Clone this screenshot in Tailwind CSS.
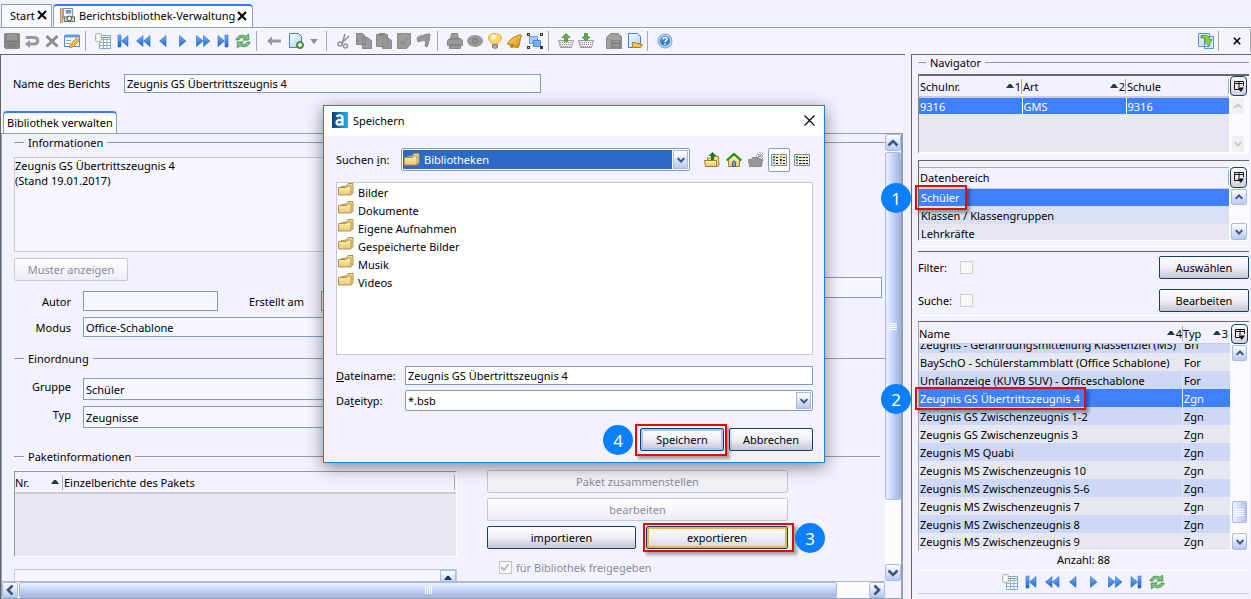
<!DOCTYPE html>
<html lang="de">
<head>
<meta charset="utf-8">
<meta name="viewport" content="width=device-width, initial-scale=1">
<title>Berichtsbibliothek-Verwaltung</title>
<script src="https://cdn.jsdelivr.net/npm/@tailwindcss/browser@4"></script>
</head>
<body class="relative flex h-screen flex-col overflow-hidden bg-[#f2f2ff] font-['Noto_Sans','Open_Sans',sans-serif] text-[11px] leading-[15px] text-black">

<svg class="absolute size-0" aria-hidden="true">
  <defs>
    <linearGradient id="blue" x1="0" y1="0" x2="0" y2="1"><stop offset="0" stop-color="#7db4f4"/><stop offset="1" stop-color="#1c63cf"/></linearGradient>
    <linearGradient id="fold" x1="0" y1="0" x2="0" y2="1"><stop offset="0" stop-color="#fdf6a8"/><stop offset="1" stop-color="#e8c678"/></linearGradient>
    <linearGradient id="page" x1="0" y1="0" x2="1" y2="1"><stop offset="0" stop-color="#ffffff"/><stop offset="1" stop-color="#a9d0f7"/></linearGradient>
    <linearGradient id="gold" x1="0" y1="0" x2="1" y2="1"><stop offset="0" stop-color="#ffdf70"/><stop offset="1" stop-color="#d98a0c"/></linearGradient>
    <linearGradient id="logo" x1="0" y1="0" x2="1" y2="0"><stop offset="0" stop-color="#0b3f78"/><stop offset="1" stop-color="#25b4ef"/></linearGradient>
  </defs>
  <symbol id="i-table" viewBox="0 0 16 16"><path fill="#fff" stroke="#7fa6d4" d="M5.500 2.500h10v13h-11v-9"/><path fill="#6cb45c" d="M7 4h8v1H7z"/><path stroke="#8eb0d8" d="M5 6.500h10M5 9.500h10M5 12.500h10M8.500 5v10M12 5v10"/><rect x=".5" y=".5" width="6" height="8" rx="1" fill="#e8e8e4" stroke="#b4b4b0"/><path stroke="#fff" stroke-width="2" d="M3.500 2v5"/></symbol>
  <symbol id="i-first" viewBox="0 0 16 16"><path fill="url(#blue)" stroke="#2a6bd0" stroke-width=".6" d="M3 2h3v12H3zM13 2.500v11L6.500 8z"/></symbol>
  <symbol id="i-rew" viewBox="0 0 16 16"><path fill="url(#blue)" stroke="#2a6bd0" stroke-width=".6" d="M8 2.500v11L1.500 8zM15 2.500v11L8.500 8z"/></symbol>
  <symbol id="i-prev" viewBox="0 0 16 16"><path fill="url(#blue)" stroke="#2a6bd0" stroke-width=".6" d="M11 2.500v11L4.500 8z"/></symbol>
  <symbol id="i-next" viewBox="0 0 16 16"><path fill="url(#blue)" stroke="#2a6bd0" stroke-width=".6" d="M4.500 2.500v11L11 8z"/></symbol>
  <symbol id="i-fwd" viewBox="0 0 16 16"><path fill="url(#blue)" stroke="#2a6bd0" stroke-width=".6" d="M1.500 2.500v11L8 8zM8.500 2.500v11L15 8z"/></symbol>
  <symbol id="i-last" viewBox="0 0 16 16"><path fill="url(#blue)" stroke="#2a6bd0" stroke-width=".6" d="M3 2.500v11L9.500 8zM10 2h3v12h-3z"/></symbol>
  <symbol id="i-refresh" viewBox="0 0 16 16"><path fill="#7cc07c" stroke="#2f8a3c" stroke-width=".7" d="M.8 7C2 2.500 7 1 11 3.200L13.500 1l.5 6-6 .2 1.600-1.700C6.500 4 4.500 5 4 7zM15.200 9C14 13.500 9 15 5 12.800L2.500 15 2 9l6-.2-1.600 1.700C9.500 12 11.500 11 12 9z"/></symbol>
  <symbol id="i-folder" viewBox="0 0 16 14"><path fill="#f0dc90" stroke="#b5904c" d="M3.500 10.500v-7l5-.5 1.500-2.500h5v9.500l-1.500 1"/><path fill="url(#fold)" stroke="#b5904c" d="M.5 4.500h8l1.500-1.500h3v9H.5z"/></symbol>
  <symbol id="i-up" viewBox="0 0 12 8"><path fill="none" stroke="currentColor" stroke-width="2.600" d="M1.500 6.500 6 2l4.500 4.500"/></symbol>
  <symbol id="i-down" viewBox="0 0 12 8"><path fill="none" stroke="currentColor" stroke-width="2.600" d="M1.500 1.500 6 6l4.500-4.500"/></symbol>
  <symbol id="i-cols" viewBox="0 0 10 11"><path fill="none" stroke="#111" d="M5 8.500H.5v-8h9V5M0 2.500h10M5 1v5"/><path fill="#111" d="M3.500 6.500h6.500L6.800 11z"/></symbol>
  <symbol id="i-sort" viewBox="0 0 8 4"><path fill="#22384f" d="M0 4 3 0h2l3 4z"/></symbol>
  <symbol id="i-x" viewBox="0 0 10 10"><path fill="none" stroke="#000" stroke-width="2" d="m1 1 8 8M9 1 1 9"/></symbol>
</svg>

<!-- Document tabs -->
<nav class="flex h-7 shrink-0 items-end border-b border-[#8f9fb5] pl-px">
  <button class="mr-px flex h-[23px] w-[51px] items-center gap-0.5 border border-b-0 border-[#8f9fb5] bg-[#f8f8ff] pb-0.5 pl-2">Start <svg class="size-2.5"><use href="#i-x"/></svg></button>
  <button class="flex h-[23px] items-center gap-1 rounded-t-sm border border-t-2 border-b-0 border-[#8f9fb5] border-t-[#3a78f0] bg-white pr-[5px] pb-0.5 pl-1.5 whitespace-nowrap">
    <svg class="size-[15px]" viewBox="0 0 16 16"><path fill="#fff" stroke="#6f8296" d="M3.500.5h10v10h-10z"/><path fill="#b98a5a" d="M0 0h3v16H0z"/><path stroke="#fff" stroke-dasharray="1 1" d="M1.500 0v16"/><path fill="#5f98e6" d="M6 2h6v4H6z"/><path fill="#d5d5d5" stroke="#555" d="M4.500 9.500h11v5h-11z"/><circle cx="10" cy="11" r="2.500" fill="#eee" stroke="#444"/></svg>
    <span class="-mr-0.5">Berichtsbibliothek-Verwaltung</span> <svg class="size-2.5"><use href="#i-x"/></svg></button>
</nav>

<!-- Toolbar -->
<div class="flex h-[26px] shrink-0 items-center justify-between border-t border-white bg-[#f4f4ff] pb-0.5 pl-1" role="toolbar">
  <div class="flex items-center gap-1">
    <button aria-label="Speichern"><svg class="block size-4" viewBox="0 0 16 16"><rect width="16" height="16" rx="2" fill="#888"/><path fill="#999" d="M3 1h10v6H3z"/><path stroke="#777" d="M0 8.500h16M4 11.500h8M4 13.500h8"/></svg></button>
    <button aria-label="Rückgängig"><svg class="block size-4" viewBox="0 0 16 16"><path fill="none" stroke="#999" stroke-width="3" d="M2 4.500h8c5 0 5 6.500 0 6.500H5"/><path fill="#999" d="M6 7v8l-5-4z"/></svg></button>
    <button aria-label="Löschen"><svg class="block size-4" viewBox="0 0 16 16"><path stroke="#8d8d8d" stroke-width="3" d="m2.500 3 11 10.500M13.500 3l-11 10.500"/></svg></button>
    <button aria-label="Bearbeiten"><svg class="block size-4" viewBox="0 0 16 16"><path fill="#fff" stroke="#4b87cf" d="M.5 2.500h15v11H.5z"/><path fill="#5d9be0" d="M1 1.500h14v3H1z"/><path stroke="#78a7df" d="M2 7.500h5M2 10.500h4M9 7.500h4"/><path fill="#f5b851" stroke="#c47b2a" stroke-width=".8" d="m5.500 15 1-4L12.500 5l3 2.500-6 6z"/></svg></button>
    <i class="ml-px mr-[5px] h-5 w-px bg-[#aaa]"></i>
    <button aria-label="Tabelle"><svg class="block size-4"><use href="#i-table"/></svg></button>
    <button aria-label="Erster"><svg class="block size-4"><use href="#i-first"/></svg></button>
    <button aria-label="Zurückspulen"><svg class="block size-4"><use href="#i-rew"/></svg></button>
    <button aria-label="Vorheriger"><svg class="block size-4"><use href="#i-prev"/></svg></button>
    <button aria-label="Nächster"><svg class="block size-4"><use href="#i-next"/></svg></button>
    <button aria-label="Vorspulen"><svg class="block size-4"><use href="#i-fwd"/></svg></button>
    <button aria-label="Letzter"><svg class="block size-4"><use href="#i-last"/></svg></button>
    <button aria-label="Aktualisieren"><svg class="block size-4"><use href="#i-refresh"/></svg></button>
    <i class="ml-px mr-[5px] h-5 w-px bg-[#aaa]"></i>
    <button aria-label="Zurück"><svg class="block size-4" viewBox="0 0 16 16"><path fill="#999" d="M1 8l5-4.500V6.500h9v3H6v3z"/></svg></button>
    <button class="ml-0.5" aria-label="Neu"><svg class="block size-4" viewBox="0 0 16 16"><path fill="url(#page)" stroke="#3d84d6" d="M1.500.5h9l3 3v11h-12z"/><circle cx="12" cy="12" r="3.500" fill="#5aa83e" stroke="#39792a"/><path stroke="#fff" stroke-width="1.500" d="M12 10v4M10 12h4"/></svg></button>
    <button aria-label="Auswahl"><svg class="block h-4 w-3" viewBox="0 0 12 16"><path fill="#8f8f94" d="M2 6h8L6 11z"/></svg></button>
    <i class="ml-0.5 mr-[5px] h-5 w-px bg-[#aaa]"></i>
    <button aria-label="Ausschneiden"><svg class="block size-4" viewBox="0 0 16 16"><g fill="none" stroke="#929292" stroke-width="1.600"><path d="M9 1 6.500 9.500M13 3 5 11"/><circle cx="4" cy="11" r="2"/><circle cx="9.500" cy="13" r="2"/></g></svg></button>
    <button aria-label="Kopieren"><svg class="block size-4" viewBox="0 0 16 16"><path fill="#999" stroke="#858585" d="M.5.5h6l3 3v8h-9zM6.500 4.500h5l4 3v8h-9z"/></svg></button>
    <button aria-label="Einfügen"><svg class="block size-4" viewBox="0 0 16 16"><path fill="#999" stroke="#8a8a8a" d="M.5 1.500h11v12H.5zM3 .5h6v2H3zM6.500 4.500h5l4 3v8h-9z"/></svg></button>
    <button aria-label="Prüfen"><svg class="block size-4" viewBox="0 0 16 16"><path fill="#9b9b9b" stroke="#8a8a8a" d="M1.500.5h13v11l-4 4h-9z"/><path fill="none" stroke="#808080" d="m5 11 7-6M4 8l2 3 4 0"/></svg></button>
    <button aria-label="Markieren"><svg class="block size-4" viewBox="0 0 16 16"><path fill="#979797" stroke="#8a8a8a" d="M1 5c3-3 5-2 7-3s4-1 6-1l-1 7-2 6-2-1 1-5c-4-1-5 0-8 1z"/></svg></button>
    <i class="ml-px mr-[5px] h-5 w-px bg-[#aaa]"></i>
    <button aria-label="Drucken"><svg class="block size-4" viewBox="0 0 16 16"><path fill="#999" stroke="#868686" d="M4.500.5h6l1 6h-8zM.5 7.500l2-2h11l2 2v5H.5zM2.500 11.500h11v4h-11z"/></svg></button>
    <button aria-label="Vorschau"><svg class="block size-4" viewBox="0 0 16 16"><ellipse cx="8" cy="8" rx="8" ry="6" fill="#999"/><circle cx="8" cy="8" r="3" fill="#808080"/><circle cx="8" cy="8" r="1.200" fill="#a5a5a5"/></svg></button>
    <button aria-label="Hinweis"><svg class="block size-4" viewBox="0 0 16 16"><path fill="#ffd66a" stroke="#eea33b" d="M5.500 11C4 8.500 1.500 8 1.500 5c0-6 13-6 13 0 0 3-2.500 3.500-4 6z"/><circle cx="7" cy="4" r="2.500" fill="#fffbd8"/><path fill="#aaa" stroke="#777" d="M5.500 11.500h5v3l-2 1-3-1z"/></svg></button>
    <button aria-label="Erinnerung"><svg class="block size-4" viewBox="0 0 16 16"><path fill="url(#gold)" stroke="#ba7410" d="M13.500 1.500c-2 1-8 2-12 7.500l-1 2 10 4 1-1c2-4 1-9 3-11z"/><circle cx="5" cy="13" r="2" fill="#c77b10"/></svg></button>
    <button aria-label="Gruppieren"><svg class="block size-4" viewBox="0 0 16 16"><path fill="#a8c8f8" stroke="#6b9dea" d="M2.500 3.500h8v7h-8z"/><path fill="#7aaaf2" stroke="#4f87e0" d="M6.500 7.500h7v6h-7z"/><g fill="#333"><path d="M0 0h3v3H0zM13 0h3v3h-3zM0 13h3v3H0zM13 13h3v3h-3z"/></g><path fill="#ddd" d="M1 1h1v1H1zM14 1h1v1h-1zM1 14h1v1H1z"/></svg></button>
    <i class="ml-px mr-[5px] h-5 w-px bg-[#aaa]"></i>
    <button aria-label="Entnehmen"><svg class="block size-4" viewBox="0 0 16 16"><path fill="#eee" stroke="#9a9a9a" d="M.5 7.500h15l-2 7h-11z"/><path stroke="#8e8e8e" stroke-dasharray="1 1" d="M2 9.500h12M2 11.500h12M3 13.500h10"/><path fill="#63b046" stroke="#36822c" stroke-width=".7" d="M8 .5 12 4.500H9.500v4h-3v-4H4z"/></svg></button>
    <button aria-label="Ablegen"><svg class="block size-4" viewBox="0 0 16 16"><path fill="#eee" stroke="#9a9a9a" d="M.5 7.500h15l-2 7h-11z"/><path stroke="#8e8e8e" stroke-dasharray="1 1" d="M2 9.500h12M2 11.500h12M3 13.500h10"/><path fill="#63b046" stroke="#36822c" stroke-width=".7" d="M8 8 12 4H9.500V.5h-3V4H4z"/></svg></button>
    <button class="ml-2" aria-label="Archiv"><svg class="block size-4" viewBox="0 0 16 16"><path fill="#a0a0a0" stroke="#8a8a8a" d="M.5 4.500l4-4h8l3 3v12H.5z"/><path fill="#858585" d="M5 7h10v8H5z"/><path stroke="#aaa" d="M7 8.500h6M7 12.500h6"/></svg></button>
    <button class="ml-px" aria-label="Öffnen"><svg class="block size-4" viewBox="0 0 16 16"><path fill="url(#page)" stroke="#3d84d6" d="M1.500.5h9l3 3v11h-12z"/><path fill="#f6c04c" stroke="#b37a1e" d="M5.500 14.500v-5h3l1 1h4v1h2l-2 3z"/></svg></button>
    <i class="mr-[5px] h-5 w-px bg-[#aaa]"></i>
    <button aria-label="Hilfe"><svg class="block size-4" viewBox="0 0 16 16"><circle cx="8" cy="8" r="7" fill="#b7d3f2" stroke="#6fa0d8"/><circle cx="8" cy="8" r="5" fill="#3f7fca"/><path fill="none" stroke="#fff" stroke-width="1.500" d="M6 6.500c0-3 4-2.500 4-.3C10 7.500 8 7.500 8 9.300M8 10.500V12"/></svg></button>
  </div>
  <div class="flex h-full items-center border-r border-[#aaa]">
    <button aria-label="Wechseln"><svg class="block size-4" viewBox="0 0 16 16"><path fill="#d6e7fa" stroke="#5b94d4" d="M.5.500h11v13H.5zM6.500 3.500h9v12h-9z"/><path fill="#8ed63b" stroke="#3f8b22" stroke-width=".8" d="M3 3c5-2 9 1 9 4l2-.5-3.500 6L6 8.500l2-.5C8 5.500 6 4 3 5z"/></svg></button>
    <i class="ml-1 h-5 w-px bg-[#aaa]"></i>
    <button class="pr-[9px] pl-3.5" aria-label="Schließen"><svg class="block size-2"><use href="#i-x"/></svg></button>
  </div>
</div>

<div class="flex min-h-0 flex-1 gap-1.5">
  <!-- Report form -->
  <main class="flex min-w-0 flex-1 flex-col border-t border-l border-[#666]">
    <div class="mt-[19px] flex h-[19px] items-center pl-3">
      <label for="name" class="w-[111px]">Name des Berichts</label>
      <input id="name" value="Zeugnis GS Übertrittszeugnis 4" class="h-[19px] w-[417px] border border-[#7f9dbd] bg-[#f7f7ff] px-0.5">
    </div>
    <div class="mt-[18px] flex pl-0.5">
      <button class="h-[22px] rounded-t-sm border border-t-2 border-b-0 border-[#8f9fb5] border-t-[#3a78f0] bg-white px-[3px] pb-px whitespace-nowrap">Bibliothek verwalten</button>
    </div>
    <div class="mr-0.5 flex min-h-0 flex-1 border border-r-2 border-[#8f9fb5]">
      <div class="flex min-w-0 flex-1 flex-col">
        <div class="min-h-0 flex-1 overflow-hidden pl-3">
          <h2 class="mt-px flex items-center gap-1"><i class="h-px w-2.5 bg-[#999]"></i>Informationen<i class="h-px flex-1 bg-[#999]"></i></h2>
          <textarea aria-label="Informationen" class="mt-[7px] block h-[95px] w-[88%] resize-none border border-[#c8c8d4] bg-[#f6f6ff]">Zeugnis GS Übertrittszeugnis 4
(Stand 19.01.2017)</textarea>
          <div class="mt-[6px] flex justify-between">
            <div>
              <button disabled class="block h-[23px] w-[114px] rounded-xs border border-[#c8c8d4] bg-linear-to-b from-white to-[#ececf6] text-[#8c8c94]">Muster anzeigen</button>
              <div class="mt-2.5 flex h-5 items-center">
                <label for="autor" class="w-[57px] text-right">Autor</label><input id="autor" class="ml-3 h-5 w-[135px] border border-[#7f9dbd] bg-[#f7f7ff] px-0.5">
                <label for="erstellt" class="w-[86px] text-right">Erstellt am</label><input id="erstellt" class="ml-[17px] h-5 w-[135px] border border-[#7f9dbd] bg-[#f7f7ff] px-0.5">
              </div>
              <div class="mt-[6px] flex h-5 items-center">
                <label for="modus" class="w-[57px] text-right">Modus</label><input id="modus" value="Office-Schablone" class="ml-3 h-5 flex-1 border border-[#7f9dbd] bg-[#f7f7ff] px-0.5">
              </div>
            </div>
            <input aria-label="Datei" class="mt-[19px] mr-[3px] h-[21px] w-[282px] border border-[#7f9dbd] bg-[#f7f7ff] px-0.5">
          </div>
          <h2 class="mt-3.5 flex items-center gap-1"><i class="h-px w-2.5 bg-[#999]"></i>Einordnung<i class="h-px flex-1 bg-[#999]"></i></h2>
          <div class="mt-3 flex h-[22px]">
            <label for="gruppe" class="w-[57px] pt-px text-right">Gruppe</label><input id="gruppe" value="Schüler" class="ml-3 h-[22px] w-[390px] border border-[#7f9dbd] bg-[#f7f7ff] px-0.5">
          </div>
          <div class="mt-[6px] flex h-[22px]">
            <label for="typ" class="w-[57px] pt-px text-right">Typ</label><input id="typ" value="Zeugnisse" class="ml-3 h-[22px] w-[390px] border border-[#7f9dbd] bg-[#f7f7ff] px-0.5">
          </div>
          <h2 class="mt-[21px] mr-[5px] flex items-center gap-1"><i class="h-px w-2.5 bg-[#999]"></i>Paketinformationen<i class="h-px flex-1 bg-[#999]"></i></h2>
          <div class="mt-[6px] flex items-start gap-[30px]">
            <div class="w-[443px] shrink-0 pt-px">
              <div class="h-[86px] border-t border-r border-b border-l border-t-[#999] border-r-white border-b-white border-l-[#999] bg-[#e7e7f2]">
                <table class="w-full bg-[#f2f2ff]">
                  <thead><tr class="h-[21px] border-b-2 border-[#ccccd8] text-left">
                    <th class="w-[48px] p-0 font-normal"><span class="flex items-center justify-between border-r border-[#aaa] pr-[3px]">Nr. <svg class="h-1 w-2"><use href="#i-sort"/></svg></span></th>
                    <th class="p-0 font-normal"><span class="mr-px block border-r border-[#aaa] pl-px">Einzelberichte des Pakets</span></th>
                  </tr></thead>
                </table>
              </div>
              <div class="mt-3 flex h-10 justify-end border border-[#c8c8d4] bg-[#f6f6ff]">
                <button aria-label="Nach oben" class="flex h-4 w-4 items-center justify-center border border-[#a9b9e0] bg-linear-to-b from-white to-[#b8c8f4] text-[#3f5878]"><svg class="h-1 w-2"><use href="#i-sort"/></svg></button>
              </div>
            </div>
            <div class="flex w-[301px] flex-col gap-[5px]">
              <button disabled class="h-[23px] rounded-xs border border-[#c8c8d4] bg-linear-to-b from-[#f8f8fc] to-[#ececf6] text-[#8c8c94]">Paket zusammenstellen</button>
              <button disabled class="h-[23px] rounded-xs border border-[#c8c8d4] bg-linear-to-b from-white to-[#ececf6] text-[#8c8c94]">bearbeiten</button>
              <div class="flex justify-between">
                <button class="h-[23px] w-[149px] rounded-xs border border-[#123e70] bg-linear-to-b from-white via-[#eeeef8] to-[#c6c6d4]">importieren</button>
                <div class="relative">
                  <button class="block h-[23px] w-[142px] rounded-xs border border-[#123e70] bg-linear-to-b from-white via-[#eeeef8] to-[#d6d6e0] shadow-[inset_0_0_0_2px_#efb345]">exportieren</button>
                  <div class="pointer-events-none absolute -top-[3px] -right-[6px] -bottom-[3px] -left-[3px] border-2 border-[#f40000] shadow-[3px_3px_3px_#0005]"></div>
                  <span class="absolute -top-[3px] left-[149px] flex size-[30px] items-center justify-center rounded-full bg-[#0a80ff] text-[17px] text-white">3</span>
                </div>
              </div>
              <label class="mt-[6px] flex items-center gap-1 pl-3 text-[#8c8c94]"><input type="checkbox" checked disabled class="size-[13px] appearance-none border border-[#c0c0cc] bg-[#f8f8f8]"><svg class="pointer-events-none -ml-[15px] mr-[3px] size-2" viewBox="0 0 8 8"><path fill="none" stroke="#b8b8c0" stroke-width="2" d="m0 3 3 3 5-6"/></svg>für Bibliothek freigegeben</label>
            </div>
          </div>
        </div>
        <!-- Horizontal scroll bar -->
        <div class="flex h-[17px] shrink-0 border-t border-[#a9b9e0] bg-[#fcfcff]">
          <button aria-label="Nach links" class="flex w-4 items-center justify-center rounded-xs border border-[#a9b9e0] bg-linear-to-b from-white to-[#b8c8f4] text-[#3f5878]"><svg class="h-2 w-3 -rotate-90"><use href="#i-up"/></svg></button>
          <div class="ml-px flex w-[818px] items-center justify-center gap-px rounded-xs border border-[#a9b9e0] bg-linear-to-b from-[#eef3ff] via-[#c3d2fa] to-[#a4b2dc]"><i class="h-2 w-px bg-white"></i><i class="h-2 w-px bg-white"></i><i class="h-2 w-px bg-white"></i><i class="h-2 w-px bg-white"></i></div>
          <button aria-label="Nach rechts" class="ml-auto flex w-4 items-center justify-center rounded-xs border border-[#a9b9e0] bg-linear-to-b from-white to-[#b8c8f4] text-[#3f5878]"><svg class="h-2 w-3 rotate-90"><use href="#i-up"/></svg></button>
        </div>
      </div>
      <!-- Vertical scroll bar -->
      <div class="mb-[17px] flex w-4 shrink-0 flex-col bg-[#fcfcff]">
        <button aria-label="Nach oben" class="flex h-[17px] items-center justify-center rounded-xs border border-[#a9b9e0] bg-linear-to-b from-white to-[#b8c8f4] text-[#3f5878]"><svg class="h-2 w-3"><use href="#i-up"/></svg></button>
        <div class="mt-px flex h-[348px] flex-col items-center justify-center gap-px rounded-xs border border-[#a9b9e0] bg-linear-to-r from-[#eef3ff] via-[#c3d2fa] to-[#a4b2dc]"><i class="h-px w-2 bg-white"></i><i class="h-px w-2 bg-white"></i><i class="h-px w-2 bg-white"></i><i class="h-px w-2 bg-white"></i></div>
        <button aria-label="Nach unten" class="mt-auto flex h-[17px] items-center justify-center rounded-xs border border-[#a9b9e0] bg-linear-to-b from-white to-[#b8c8f4] text-[#3f5878]"><svg class="h-2 w-3"><use href="#i-down"/></svg></button>
      </div>
    </div>
  </main>

  <!-- Navigator -->
  <aside class="flex w-[340px] shrink-0 flex-col border-t border-l border-[#666] pr-0.5 pl-1.5">
    <h2 class="flex items-center gap-1"><i class="h-px w-2 bg-[#999]"></i>Navigator<i class="h-px flex-1 bg-[#999]"></i></h2>

    <div class="mt-1 flex h-20 shrink-0 border-2 border-r-0 border-l border-[#666] border-b-white border-l-[#888] bg-[#e7e7f2]">
      <div class="flex-1">
        <table class="w-full table-fixed">
          <thead><tr class="h-[21px] border-b-2 border-[#ccccd8] bg-[#f2f2ff] text-left">
            <th class="w-[103px] p-0 font-normal"><span class="flex items-center border-r border-[#aaa] pl-px">Schulnr.<svg class="mr-px ml-auto h-1 w-2"><use href="#i-sort"/></svg>1</span></th>
            <th class="w-[104px] p-0 font-normal"><span class="flex items-center border-r border-[#aaa] pl-px">Art<svg class="mr-px ml-auto h-1 w-2"><use href="#i-sort"/></svg>2</span></th>
            <th class="p-0 font-normal"><span class="block border-r border-[#aaa] pl-px">Schule</span></th>
          </tr></thead>
          <tbody><tr class="h-[17px] bg-[#3f80ff] text-white"><td class="border-r border-white p-0 pl-px">9316</td><td class="border-r border-white p-0 pl-px">GMS</td><td class="p-0 pl-px">9316</td></tr></tbody>
        </table>
      </div>
      <div class="flex w-5 flex-col bg-[#fafaff]">
        <button aria-label="Spalten" class="ml-px flex h-5 w-[17px] items-center justify-center rounded-sm border border-[#123e70] bg-linear-to-b from-white to-[#d0d0e0]"><svg class="h-[11px] w-2.5"><use href="#i-cols"/></svg></button>
        <button disabled aria-label="Nach oben" class="mt-0.5 ml-[3px] flex h-4 w-3 items-center justify-center bg-[#f0f0f4] text-[#c8c8cc]"><svg class="h-1.5 w-2.5"><use href="#i-up"/></svg></button>
        <button disabled aria-label="Nach unten" class="mt-auto ml-[3px] flex h-4 w-3 items-center justify-center bg-[#f0f0f4] text-[#c8c8cc]"><svg class="h-1.5 w-2.5"><use href="#i-down"/></svg></button>
      </div>
    </div>

    <div class="relative mt-[6px] flex h-[81px] shrink-0 border-t border-b border-l border-[#666] border-b-white pt-1.5">
      <div class="flex-1 overflow-hidden border-t border-[#aaa] bg-[#e7e7f2]">
        <table class="w-full">
          <thead><tr class="h-5 border-b border-[#ccccd8] bg-[#f2f2ff] text-left"><th class="p-0 font-normal"><span class="block border-r border-[#aaa] pl-px">Datenbereich</span></th></tr></thead>
          <tbody>
            <tr class="h-[18px] bg-[#3f80ff] text-white"><td class="p-0 pl-0.5">Schüler</td></tr>
            <tr class="h-[18px] bg-[#dae0f4]"><td class="p-0 pl-0.5">Klassen / Klassengruppen</td></tr>
            <tr class="h-[18px]"><td class="p-0 pl-0.5">Lehrkräfte</td></tr>
          </tbody>
        </table>
      </div>
      <div class="flex w-5 flex-col bg-[#fafaff]">
        <button aria-label="Spalten" class="ml-px flex h-[21px] w-[17px] items-center justify-center rounded-sm border border-[#123e70] bg-linear-to-b from-white to-[#d0d0e0]"><svg class="h-[11px] w-2.5"><use href="#i-cols"/></svg></button>
        <button aria-label="Nach oben" class="mx-0.5 mt-px flex h-4 items-center justify-center rounded-xs border border-[#a9b9e0] bg-linear-to-b from-white to-[#b8c8f4] text-[#3f5878]"><svg class="h-1.5 w-2.5"><use href="#i-up"/></svg></button>
        <button aria-label="Nach unten" class="mx-0.5 mt-auto flex h-[17px] items-center justify-center rounded-xs border border-[#a9b9e0] bg-linear-to-b from-white to-[#b8c8f4] text-[#3f5878]"><svg class="h-1.5 w-2.5"><use href="#i-down"/></svg></button>
      </div>
      <div class="pointer-events-none absolute top-[24px] -left-[4px] h-[25px] w-[52px] border-2 border-[#f40000] shadow-[3px_3px_3px_#0005]"></div>
      <span class="absolute top-[22px] -left-[38px] flex size-[30px] items-center justify-center rounded-full bg-[#0a80ff] text-[17px] text-white">1</span>
    </div>
    <div class="mt-[5px] h-[6px] shrink-0 border-t border-b border-white border-b-[#666]"></div>

    <div class="mt-1 flex h-[23px] shrink-0 items-center"><label for="filter" class="w-[42px]">Filter:</label><input id="filter" type="checkbox" class="size-[13px] appearance-none border border-[#d0d0d8] bg-[#f8f8f8]"><button class="ml-auto h-[23px] w-[90px] rounded-xs border border-[#123e70] bg-linear-to-b from-white via-[#eeeef8] to-[#c6c6d4]">Auswählen</button></div>
    <div class="mt-2.5 flex h-[23px] shrink-0 items-center"><label for="suche" class="w-[42px]">Suche:</label><input id="suche" type="checkbox" class="size-[13px] appearance-none border border-[#d0d0d8] bg-[#f8f8f8]"><button class="ml-auto h-[23px] w-[90px] rounded-xs border border-[#123e70] bg-linear-to-b from-white via-[#eeeef8] to-[#c6c6d4]">Bearbeiten</button></div>

    <div class="mt-[3px] h-px shrink-0 bg-white"></div>
    <div class="relative mt-[5px] flex min-h-0 flex-1 border-t border-b border-l border-[#666] border-b-white border-l-[#aaa]">
      <div class="flex-1 overflow-hidden bg-[#e7e7f2]">
        <table class="w-full table-fixed border-separate border-spacing-0 whitespace-nowrap">
          <thead><tr class="h-[22px] bg-[#f2f2ff] text-left">
            <th class="w-[264px] border-b border-[#ccccd8] p-0 pt-px font-normal"><span class="flex items-center border-r border-[#aaa]">Name<svg class="mr-px ml-auto h-1 w-2"><use href="#i-sort"/></svg>4</span></th>
            <th class="border-b border-[#ccccd8] p-0 pt-px font-normal"><span class="flex items-center pr-0.5">Typ<svg class="mr-px ml-auto h-1 w-2"><use href="#i-sort"/></svg>3</span></th>
          </tr></thead>
          <tbody>
            <!-- First row is scrolled half under the header -->
            <tr class="bg-[#ccd8f5]"><td class="border-r border-[#e7e7f2] p-0 pl-px"><div class="flex h-[9px] items-end overflow-hidden pb-px">Zeugnis - Gefährdungsmitteilung Klassenziel (MS)</div></td><td class="p-0 pl-px"><div class="flex h-[9px] items-end overflow-hidden pb-px">Bri</div></td></tr>
            <tr class="h-[18px]"><td class="border-r border-[#e7e7f2] p-0 pl-px">BaySchO - Schülerstammblatt (Office Schablone)</td><td class="p-0 pl-px">For</td></tr>
            <tr class="h-[18px] bg-[#ccd8f5]"><td class="border-r border-[#e7e7f2] p-0 pl-px">Unfallanzeige (KUVB SUV) - Officeschablone</td><td class="p-0 pl-px">For</td></tr>
            <tr class="h-[18px] bg-[#3f80ff] text-white"><td class="border-r border-[#e7e7f2] p-0 pl-px">Zeugnis GS Übertrittszeugnis 4</td><td class="p-0 pl-px">Zgn</td></tr>
            <tr class="h-[18px] bg-[#ccd8f5]"><td class="border-r border-[#e7e7f2] p-0 pl-px">Zeugnis GS Zwischenzeugnis 1-2</td><td class="p-0 pl-px">Zgn</td></tr>
            <tr class="h-[18px]"><td class="border-r border-[#e7e7f2] p-0 pl-px">Zeugnis GS Zwischenzeugnis 3</td><td class="p-0 pl-px">Zgn</td></tr>
            <tr class="h-[18px] bg-[#ccd8f5]"><td class="border-r border-[#e7e7f2] p-0 pl-px">Zeugnis MS Quabi</td><td class="p-0 pl-px">Zgn</td></tr>
            <tr class="h-[18px]"><td class="border-r border-[#e7e7f2] p-0 pl-px">Zeugnis MS Zwischenzeugnis 10</td><td class="p-0 pl-px">Zgn</td></tr>
            <tr class="h-[18px] bg-[#ccd8f5]"><td class="border-r border-[#e7e7f2] p-0 pl-px">Zeugnis MS Zwischenzeugnis 5-6</td><td class="p-0 pl-px">Zgn</td></tr>
            <tr class="h-[18px]"><td class="border-r border-[#e7e7f2] p-0 pl-px">Zeugnis MS Zwischenzeugnis 7</td><td class="p-0 pl-px">Zgn</td></tr>
            <tr class="h-[18px] bg-[#ccd8f5]"><td class="border-r border-[#e7e7f2] p-0 pl-px">Zeugnis MS Zwischenzeugnis 8</td><td class="p-0 pl-px">Zgn</td></tr>
            <tr class="h-4"><td class="border-r border-[#e7e7f2] p-0 pl-px">Zeugnis MS Zwischenzeugnis 9</td><td class="p-0 pl-px">Zgn</td></tr>
          </tbody>
        </table>
      </div>
      <div class="flex w-[19px] flex-col bg-[#fafaff]">
        <button aria-label="Spalten" class="mt-0.5 ml-px flex h-5 w-[17px] shrink-0 items-center justify-center rounded-sm border border-[#123e70] bg-linear-to-b from-white to-[#d0d0e0]"><svg class="h-[11px] w-2.5"><use href="#i-cols"/></svg></button>
        <button aria-label="Nach oben" class="mx-0.5 mt-px flex h-4 shrink-0 items-center justify-center rounded-xs border border-[#a9b9e0] bg-linear-to-b from-white to-[#b8c8f4] text-[#3f5878]"><svg class="h-1.5 w-2.5"><use href="#i-up"/></svg></button>
        <div class="mx-0.5 mt-auto mb-2.5 flex h-[22px] flex-col items-center justify-center gap-px rounded-xs border border-[#a9b9e0] bg-linear-to-r from-[#eef3ff] to-[#b4c4f0]"><i class="h-px w-2 bg-white"></i><i class="h-px w-2 bg-white"></i><i class="h-px w-2 bg-white"></i><i class="h-px w-2 bg-white"></i></div>
        <button aria-label="Nach unten" class="mx-0.5 flex h-[17px] items-center justify-center rounded-xs border border-[#a9b9e0] bg-linear-to-b from-white to-[#b8c8f4] text-[#3f5878]"><svg class="h-1.5 w-2.5"><use href="#i-down"/></svg></button>
      </div>
      <div class="pointer-events-none absolute top-[65px] -left-[4px] h-[23px] w-[171px] border-2 border-[#f40000] shadow-[3px_3px_3px_#0005]"></div>
      <span class="absolute top-[62px] -left-[38px] flex size-[30px] items-center justify-center rounded-full bg-[#0a80ff] text-[17px] text-white">2</span>
    </div>
    <p class="mt-px text-center">Anzahl: 88</p>
    <div class="mt-[3px] mb-[5px] flex shrink-0 items-center justify-center gap-[5px] border-t border-b border-white border-b-[#c8c8d8] py-[3px]">
      <button aria-label="Tabelle"><svg class="block size-4"><use href="#i-table"/></svg></button>
      <button aria-label="Erster"><svg class="block size-4"><use href="#i-first"/></svg></button>
      <button aria-label="Zurückspulen"><svg class="block size-4"><use href="#i-rew"/></svg></button>
      <button aria-label="Vorheriger"><svg class="block size-4"><use href="#i-prev"/></svg></button>
      <button aria-label="Nächster"><svg class="block size-4"><use href="#i-next"/></svg></button>
      <button aria-label="Vorspulen"><svg class="block size-4"><use href="#i-fwd"/></svg></button>
      <button aria-label="Letzter"><svg class="block size-4"><use href="#i-last"/></svg></button>
      <button aria-label="Aktualisieren"><svg class="block size-4"><use href="#i-refresh"/></svg></button>
    </div>
  </aside>
</div>

<!-- Save dialog -->
<section role="dialog" aria-label="Speichern" class="absolute top-[105px] left-[323px] w-[502px] border border-[#1883d7] bg-[#f2f2ff] shadow-[0_4px_16px_#0007]">
  <header class="flex h-[30px] items-center bg-white pr-[9px] pb-0.5 pl-2">
    <svg class="mr-[5px] size-4" viewBox="0 0 16 16"><path fill="url(#logo)" d="M0 0h16v16H0z"/><path fill="none" stroke="#fff" stroke-width="2.200" d="M4.500 4.500c2-2 6-1.500 6 1.500v7.500M10.500 8C7 7.500 4.500 8.500 4.500 10.500c0 3 5 2.500 6 0"/></svg>
    Speichern
    <button aria-label="Schließen" class="ml-auto"><svg class="block size-[11px]" viewBox="0 0 11 11"><path stroke="#000" stroke-width="1.100" d="m.5.5 10 10M10.500.5l-10 10"/></svg></button>
  </header>
  <div class="pt-3 pr-[11px] pb-[11px] pl-3">
    <div class="flex h-[23px] items-center">
      <label for="suchen" class="w-[65px]">Suchen <u>i</u>n:</label>
      <div class="relative flex h-[23px] w-[289px] items-center rounded-xs border border-[#7f9dbd] bg-white p-px">
        <svg class="pointer-events-none absolute left-0.5 h-3.5 w-4"><use href="#i-folder"/></svg>
        <select id="suchen" class="h-[19px] min-w-0 flex-1 appearance-none bg-[#2d6ac6] pl-[21px] text-white"><option>Bibliotheken</option></select>
        <span class="pointer-events-none ml-px flex h-[19px] w-[15px] items-center justify-center border border-[#a9b9e0] bg-linear-to-b from-white to-[#b8c8f4] text-[#3f5878]"><svg class="h-1.5 w-2.5"><use href="#i-down"/></svg></span>
      </div>
      <div class="ml-3.5 flex items-center gap-[6px]">
        <button aria-label="Übergeordneter Ordner"><svg class="block size-4" viewBox="0 0 16 16"><path fill="#f0dc90" stroke="#a17d2f" d="M3.500 9V6h4l1-1.500h6l.5 9-2 1"/><path fill="url(#fold)" stroke="#a17d2f" d="M.5 8.500h12v6H1.500z"/><path fill="#1d7d1d" d="M8.500 0 12.500 4H10v4H7V4H4.500z"/></svg></button>
        <button aria-label="Persönlicher Ordner"><svg class="block size-4" viewBox="0 0 16 16"><path fill="url(#fold)" stroke="#a17d2f" d="M2.500 7.500 8 3l5.500 4.500v7h-11z"/><path fill="none" stroke="#149614" stroke-width="2" d="M.7 8.500 8 1.800l7.300 6.700"/><path fill="#7c9ed2" stroke="#3c5c95" d="M6.500 14.500v-4c0-2 3-2 3 0v4z"/></svg></button>
        <button disabled aria-label="Neuer Ordner"><svg class="block size-4" viewBox="0 0 16 16"><path fill="#999" stroke="#8a8a8a" d="M.5 7.500h3l1-2h6l1 2h3l-1 7h-12z"/><path stroke="#666" stroke-dasharray="1 1" d="M12 0v8M8 4h8M9 1l6 6M15 1 9 7"/></svg></button>
        <button aria-label="Liste" class="-mr-[3px] -ml-0.5 rounded-xs border border-[#7f9dbd] bg-white px-0.5 py-[3px]"><svg class="block size-4" viewBox="0 0 16 16"><path fill="#efecd8" stroke="#888" d="M.5 2.500h15v11H.5z"/><path stroke="#111" stroke-width="1.200" d="M5 5.500h2M5 8.500h2M5 11.500h2M12 5.500h2M12 8.500h2M12 11.500h2"/><path fill="#0a9a20" d="M2 4h2v2H2z"/><path fill="#1b7de0" d="M2 7h2v2H2z"/><path fill="#9a80d8" d="M2 10h2v2H2z"/><path fill="#d6a000" d="M9 4h2v2H9z"/><path fill="#103ba0" d="M9 7h2v2H9z"/><path fill="#f47a40" d="M9 10h2v2H9z"/></svg></button>
        <button aria-label="Details" class="ml-px"><svg class="block size-4" viewBox="0 0 16 16"><path fill="#efecd8" stroke="#888" d="M.5 2.500h15v11H.5z"/><path stroke="#111" stroke-width="1.200" stroke-dasharray="2.500 1" d="M5 5.500h9M5 8.500h9M5 11.500h9"/><path fill="#0a9a20" d="M2 4h2v2H2z"/><path fill="#1b7de0" d="M2 7h2v2H2z"/><path fill="#9a80d8" d="M2 10h2v2H2z"/></svg></button>
      </div>
    </div>
    <ul class="mt-[11px] h-[173px] border border-[#c8c8d4] bg-white pl-px">
      <li class="flex h-[18px] items-center gap-1"><svg class="mb-1 h-3.5 w-4"><use href="#i-folder"/></svg>Bilder</li>
      <li class="flex h-[18px] items-center gap-1"><svg class="mb-1 h-3.5 w-4"><use href="#i-folder"/></svg>Dokumente</li>
      <li class="flex h-[18px] items-center gap-1"><svg class="mb-1 h-3.5 w-4"><use href="#i-folder"/></svg>Eigene Aufnahmen</li>
      <li class="flex h-[18px] items-center gap-1"><svg class="mb-1 h-3.5 w-4"><use href="#i-folder"/></svg>Gespeicherte Bilder</li>
      <li class="flex h-[18px] items-center gap-1"><svg class="mb-1 h-3.5 w-4"><use href="#i-folder"/></svg>Musik</li>
      <li class="flex h-[18px] items-center gap-1"><svg class="mb-1 h-3.5 w-4"><use href="#i-folder"/></svg>Videos</li>
    </ul>
    <div class="mt-[11px] flex h-[19px] items-center"><label for="datei" class="w-[69px]"><u>D</u>ateiname:</label><input id="datei" value="Zeugnis GS Übertrittszeugnis 4" class="h-[19px] min-w-0 flex-1 border border-[#7f9dbd] bg-white px-0.5"></div>
    <div class="mt-[5px] flex h-[21px] items-center"><label for="dateityp" class="w-[69px]">Da<u>t</u>eityp:</label>
      <div class="flex h-[21px] min-w-0 flex-1 items-center rounded-xs border border-[#7f9dbd] bg-white pr-px"><select id="dateityp" class="min-w-0 flex-1 appearance-none bg-white pl-0.5"><option>*.bsb</option></select><span class="pointer-events-none flex h-[17px] w-[15px] items-center justify-center border border-[#a9b9e0] bg-linear-to-b from-white to-[#b8c8f4] text-[#3f5878]"><svg class="h-1.5 w-2.5"><use href="#i-down"/></svg></span></div>
    </div>
    <div class="mt-[17px] flex justify-end gap-[5px]">
      <div class="relative">
        <button class="block h-[23px] w-[84px] rounded-xs border border-[#123e70] bg-linear-to-b from-white via-[#eeeef8] to-[#c6c6d4] shadow-[inset_0_0_0_2px_#b0c0f0]">Speichern</button>
        <div class="pointer-events-none absolute -top-1 -right-[3px] -bottom-[5px] -left-[5px] border-2 border-[#f40000] shadow-[3px_3px_3px_#0005]"></div>
        <span class="absolute -top-[3px] -left-[37px] flex size-[30px] items-center justify-center rounded-full bg-[#0a80ff] text-[17px] text-white">4</span>
      </div>
      <button class="h-[23px] w-[84px] rounded-xs border border-[#123e70] bg-linear-to-b from-white via-[#eeeef8] to-[#c6c6d4]">Abbrechen</button>
    </div>
  </div>
</section>

</body>
</html>
